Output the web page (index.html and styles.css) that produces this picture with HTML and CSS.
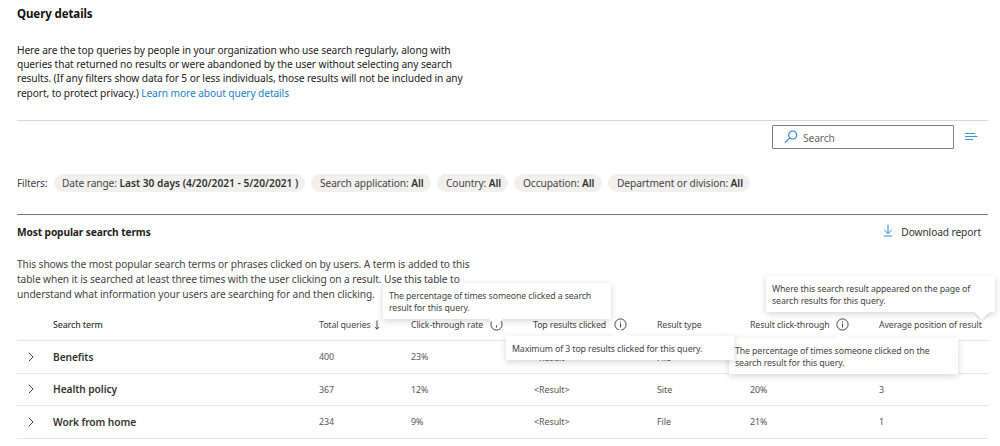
FILE: index.html
```html
<!DOCTYPE html>
<html lang="en">
<head>
<meta charset="utf-8">
<title>Query details</title>
<link rel="stylesheet" href="styles.css">
</head>
<body>
<main class="page">
  <section class="intro">
    <h1 class="title">Query details</h1>
    <p class="lead">Here are the top queries by people in your organization who use search regularly, along with<br>queries that returned no results or were abandoned by the user without selecting any search<br>results. (If any filters show data for 5 or less individuals, those results will not be included in any<br>report, to protect privacy.) <a class="link">Learn more about query details</a></p>
  </section>

  <section class="toolbar">
    <div class="search">
      <svg class="glass" viewBox="0 0 14 14"><circle cx="8.7" cy="5" r="4"/><path d="M5.8 7.9 1 12.7"/></svg>
      <span class="placeholder">Search</span>
    </div>
    <svg class="lines" viewBox="0 0 14 10"><path d="M1 1.5h10M1 4.5h12.5M1 7.5h8"/></svg>
  </section>

  <section class="filters">
    <span class="filters-label">Filters:</span>
    <span class="pill p1">Date range: <b>Last 30 days (4/20/2021 - 5/20/2021 )</b></span>
    <span class="pill p2">Search application: <b>All</b></span>
    <span class="pill p3">Country: <b>All</b></span>
    <span class="pill p4">Occupation: <b>All</b></span>
    <span class="pill p5">Department or division: <b>All</b></span>
  </section>

  <section class="report">
    <header class="report-head">
      <h2 class="subtitle">Most popular search terms</h2>
      <div class="download">
        <svg class="down" viewBox="0 0 10 13"><path d="M5 .5v9M1.5 6.2 5 9.7l3.5-3.5M1 12h8"/></svg>
        <span>Download report</span>
      </div>
    </header>
    <p class="about">This shows the most popular search terms or phrases clicked on by users. A term is added to this<br>table when it is searched at least three times with the user clicking on a result. Use this table to<br>understand what information your users are searching for and then clicking.</p>

    <div class="table">
      <div class="row head">
        <span></span>
        <span class="term-head">Search term</span>
        <span class="sorted">Total queries<svg class="sort" viewBox="0 0 6 10"><path d="M3 .5v8.5M.8 7 3 9.2 5.2 7"/></svg></span>
        <span class="with-info">Click-through rate<svg class="info" viewBox="0 0 13 13"><circle cx="6.5" cy="6.5" r="5.6"/><path d="M6.5 5.5v4M6.5 3.4v1"/></svg></span>
        <span class="with-info">Top results clicked<svg class="info" viewBox="0 0 13 13"><circle cx="6.5" cy="6.5" r="5.6"/><path d="M6.5 5.5v4M6.5 3.4v1"/></svg></span>
        <span>Result type</span>
        <span class="with-info wide">Result click-through<svg class="info" viewBox="0 0 13 13"><circle cx="6.5" cy="6.5" r="5.6"/><path d="M6.5 5.5v4M6.5 3.4v1"/></svg></span>
        <span>Average position of result</span>
      </div>
      <div class="row">
        <svg class="chev" viewBox="0 0 6 10"><path d="M.8.8 5 5 .8 9.2"/></svg>
        <span class="term">Benefits</span><span>400</span><span>23%</span><span class="res low">&lt;Result&gt;</span><span class="low">File</span><span></span><span></span>
      </div>
      <div class="row">
        <svg class="chev" viewBox="0 0 6 10"><path d="M.8.8 5 5 .8 9.2"/></svg>
        <span class="term">Health policy</span><span>367</span><span>12%</span><span class="res">&lt;Result&gt;</span><span>Site</span><span>20%</span><span>3</span>
      </div>
      <div class="row">
        <svg class="chev" viewBox="0 0 6 10"><path d="M.8.8 5 5 .8 9.2"/></svg>
        <span class="term">Work from home</span><span>234</span><span>9%</span><span class="res">&lt;Result&gt;</span><span>File</span><span>21%</span><span>1</span>
      </div>
    </div>
  </section>

  <div class="tip tip-rate">The percentage of times someone clicked a search<br>result for this query.</div>
  <div class="tip tip-click">The percentage of times someone clicked on the<br>search result for this query.</div>
  <div class="tip tip-top">Maximum of 3 top results clicked for this query.</div>
  <div class="tip tip-pos">Where this search result appeared on the page of<br>search results for this query.</div>
</main>
</body>
</html>
```
FILE: styles.css
```css
* { box-sizing: border-box; }
body { margin: 0; background: #fff; color: #333; font-family: "Noto Sans", "Open Sans", sans-serif; font-size: 10.2px; letter-spacing: -.1px; }
.page { position: relative; width: 1000px; height: 446px; overflow: hidden; padding: 0 12px 0 17px; white-space: nowrap; }
h1, h2, p { margin: 0; }
svg { display: block; fill: none; stroke: #444; stroke-width: 1; flex: none; }

.intro { height: 121px; padding-top: 6px; border-bottom: 1px solid #d8d8d8; }
.title { font-size: 11.5px; line-height: 16px; font-weight: 700; color: #111; }
.lead { margin-top: 21px; line-height: 14.2px; color: #222; }
.link { color: #1a7fd0; }

.toolbar { height: 53px; padding: 4px 10px 0 0; display: flex; justify-content: flex-end; gap: 10px; }
.search { width: 182px; height: 24px; border: 1px solid #808080; border-radius: 1px; display: flex; align-items: center; padding-left: 11px; gap: 5px; }
.glass { width: 14px; height: 14px; stroke: #2b88d8; stroke-width: 1.2; }
.placeholder { color: #666; padding-top: 1px; }
.lines { width: 14px; height: 10px; margin-top: 7px; stroke: #3a96dd; }

.filters { height: 40px; display: flex; align-items: flex-start; }
.filters-label { width: 37px; line-height: 18px; letter-spacing: -.2px; color: #444; }
.pill { height: 18px; line-height: 19px; border-radius: 9px; background: #f1f0ef; padding-left: 9px; margin-right: 6px; color: #444; }
.pill b { font-weight: 600; color: #333; }
.p1 { width: 251px; padding-left: 8px; }
.p1 b { letter-spacing: 0; }
.p2 { width: 120px; }
.p3 { width: 71px; }
.p4 { width: 88px; }
.p5 { width: 142px; }

.report { border-top: 1px solid #777; }
.report-head { height: 41px; padding-top: 9px; display: flex; justify-content: space-between; line-height: 17px; }
.subtitle { font-size: 10.2px; font-weight: 700; letter-spacing: -.12px; color: #222; }
.download { display: flex; padding-right: 7px; gap: 8px; }
.down { width: 10px; height: 13px; margin-top: 0; stroke: #2b88d8; }
.about { height: 53px; padding-top: .5px; line-height: 15.2px; color: #444; }

.table { font-size: 8.9px; color: #555; letter-spacing: -.05px; }
.row { display: grid; grid-template-columns: 36px 266px 92px 122px 124px 93px 129px 109px; align-items: center; height: 32.6px; border-bottom: 1px solid #e6e6e6; }
.head { height: 32px; font-size: 8.75px; letter-spacing: -.1px; color: #444; }
.term-head { font-weight: 500; color: #333; }
.sorted { display: flex; align-items: center; gap: 3px; }
.sort { width: 6px; height: 10px; }
.with-info { display: flex; align-items: center; justify-content: space-between; padding-right: 30px; }
.info { width: 13px; height: 13px; margin-bottom: 1px; }
.res { padding-left: 1px; }
.low { padding-top: 2px; }
.chev { width: 6px; height: 10px; margin-left: 11px; }
.term { font-size: 10.2px; font-weight: 600; letter-spacing: -.07px; color: #333; }

.tip { position: absolute; background: #fff; font-size: 8.75px; line-height: 12.2px; color: #444; padding: 7px 6px 0; box-shadow: 0 2px 7px rgba(0,0,0,.17); }
.tip::after { content: ""; position: absolute; border: 8px solid transparent; }
.tip-rate { left: 383px; top: 283px; width: 228px; height: 36px; }
.tip-rate::after { left: 106px; top: 36px; border-width: 7px; border-top-color: #fff; border-bottom: 0; }
.tip-click { left: 729px; top: 338px; width: 229px; height: 36px; }
.tip-click::after { left: 106px; top: -7px; border-bottom-color: #fff; border-top: 0; }
.tip-top { left: 506px; top: 336px; width: 228px; height: 23.5px; }
.tip-top::after { left: 106px; top: -7px; border-bottom-color: #fff; border-top: 0; }
.tip-pos { left: 766px; top: 276px; width: 229px; height: 36px; }
.tip-pos::after { left: 208px; top: 36px; border-top-color: #fff; border-bottom: 0; filter: drop-shadow(0 1px 1px rgba(0,0,0,.2)); }
```
